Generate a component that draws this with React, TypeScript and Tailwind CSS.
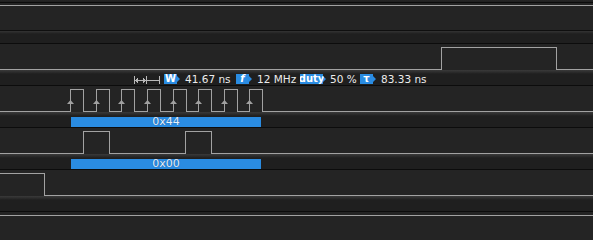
import React from "react";

const LINE = "#a2a2a2";
const W = 593;

function Body({ h, children }: { h: number; children?: React.ReactNode }) {
  return (
    <div className="bg-[#242424] shrink-0" style={{ height: h }}>
      <svg width={W} height={h} className="block">
        {children}
      </svg>
    </div>
  );
}

function Sig({ d }: { d: string }) {
  return <path d={d} fill="none" stroke={LINE} strokeWidth={1} shapeRendering="crispEdges" />;
}

const rises = [70, 96, 121, 147, 173, 198, 224, 249];

function clockPath() {
  let d = "M0 25.5";
  for (const r of rises) {
    d += ` H${r + 0.5} V3.5 H${r + 13.5} V25.5`;
  }
  d += ` H${W}`;
  return d;
}

function Badge({ children, w, italic }: { children: React.ReactNode; w: number; italic?: boolean }) {
  return (
    <div
      className={`h-[10px] bg-[#2a8ce2] text-white font-bold text-[10px] leading-[10px] flex items-center justify-center pr-[3px] shrink-0 [clip-path:polygon(0_0,calc(100%_-_3px)_0,calc(100%_-_3px)_2px,100%_5px,calc(100%_-_3px)_8px,calc(100%_-_3px)_100%,0_100%)] ${italic ? "italic" : ""}`}
      style={{ width: w }}
    >
      {children}
    </div>
  );
}

function DecodeRow({ label }: { label: string }) {
  return (
    <div className="h-[16px] shrink-0 bg-[linear-gradient(#3a3a3a,#1f1f1f_4px,#1f1f1f_15px,#0c0c0c_15px)] pt-[5px]">
      <div className="ml-[71px] w-[190px] h-[10px] bg-[#2a8ce2] text-[#e6f0fb] text-[11px] leading-[10px] flex items-center justify-center [text-shadow:0_0_1px_#0b4a8a]">
        {label}
      </div>
    </div>
  );
}

export default function App() {
  return (
    <div
      className="w-[593px] h-[240px] overflow-hidden flex flex-col bg-[#242424]"
      style={{ fontFamily: '"DejaVu Sans", Verdana, sans-serif' }}
    >
      {/* tail of separator above */}
      <div className="h-[3px] shrink-0 bg-[linear-gradient(#262626,#1f1f1f_2px,#0c0c0c_2px)]" />
      {/* Channel A: constant high */}
      <Body h={27}>
        <Sig d={`M0 2.5 H${W}`} />
      </Body>
      {/* separator */}
      <div className="h-[14px] shrink-0 bg-[linear-gradient(#0f0f0f,#0f0f0f_1px,#333333_1px,#1f1f1f_4px,#1f1f1f_13px,#0c0c0c_13px)]" />
      {/* Channel B */}
      <Body h={26}>
        <Sig d={`M0 25.5 H441.5 V3.5 H556.5 V25.5 H${W}`} />
      </Body>
      {/* Measurement row */}
      <div className="h-[16px] shrink-0 bg-[linear-gradient(#3a3a3a,#1f1f1f_4px,#1f1f1f_15px,#0c0c0c_15px)] flex items-start pt-[4px] text-[#ececec] text-[10.5px] leading-[10px]">
        <svg width={26} height={8} className="ml-[134px] mt-[2px] shrink-0" shapeRendering="crispEdges">
          <g stroke="#b8b8b8" strokeWidth={1} fill="none">
            <path d="M0.5 0 V8 M12.5 0 V8 M25.5 0 V8 M1 4.5 H12 M13 4.5 H25" />
          </g>
          <path d="M1 4.5 L4 2 V7 Z M12 4.5 L9 2 V7 Z" fill="#b8b8b8" />
        </svg>
        <div className="ml-[4px]">
          <Badge w={16}>W</Badge>
        </div>
        <span className="ml-[5px] w-[46px] whitespace-nowrap">41.67 ns</span>
        <div className="ml-[5px]">
          <Badge w={16} italic>f</Badge>
        </div>
        <span className="ml-[5px] w-[39px] whitespace-nowrap">12 MHz</span>
        <div className="ml-[4px]">
          <Badge w={26}>duty</Badge>
        </div>
        <span className="ml-[4px] w-[26px] whitespace-nowrap">50 %</span>
        <div className="ml-[4px]">
          <Badge w={16}>τ</Badge>
        </div>
        <span className="ml-[5px] whitespace-nowrap">83.33 ns</span>
      </div>
      {/* Channel C: clock */}
      <Body h={26}>
        <Sig d={clockPath()} />
        {rises.map((r) => (
          <path key={r} d={`M${r + 0.5} 14 L${r + 4} 18 L${r - 3} 18 Z`} fill="#a0a0a0" />
        ))}
      </Body>
      <DecodeRow label="0x44" />
      {/* Channel D: data */}
      <Body h={26}>
        <Sig d={`M0 25.5 H83.5 V3.5 H109.5 V25.5 H185.5 V3.5 H211.5 V25.5 H${W}`} />
      </Body>
      <DecodeRow label="0x00" />
      {/* Channel E */}
      <Body h={26}>
        <Sig d={`M0 3.5 H44.5 V25.5 H${W}`} />
      </Body>
      {/* separator */}
      <div className="h-[16px] shrink-0 bg-[linear-gradient(#3a3a3a,#1f1f1f_4px,#1f1f1f_15px,#0c0c0c_15px)]" />
      {/* Channel F: constant high */}
      <Body h={28}>
        <Sig d={`M0 3.5 H${W}`} />
      </Body>
    </div>
  );
}
